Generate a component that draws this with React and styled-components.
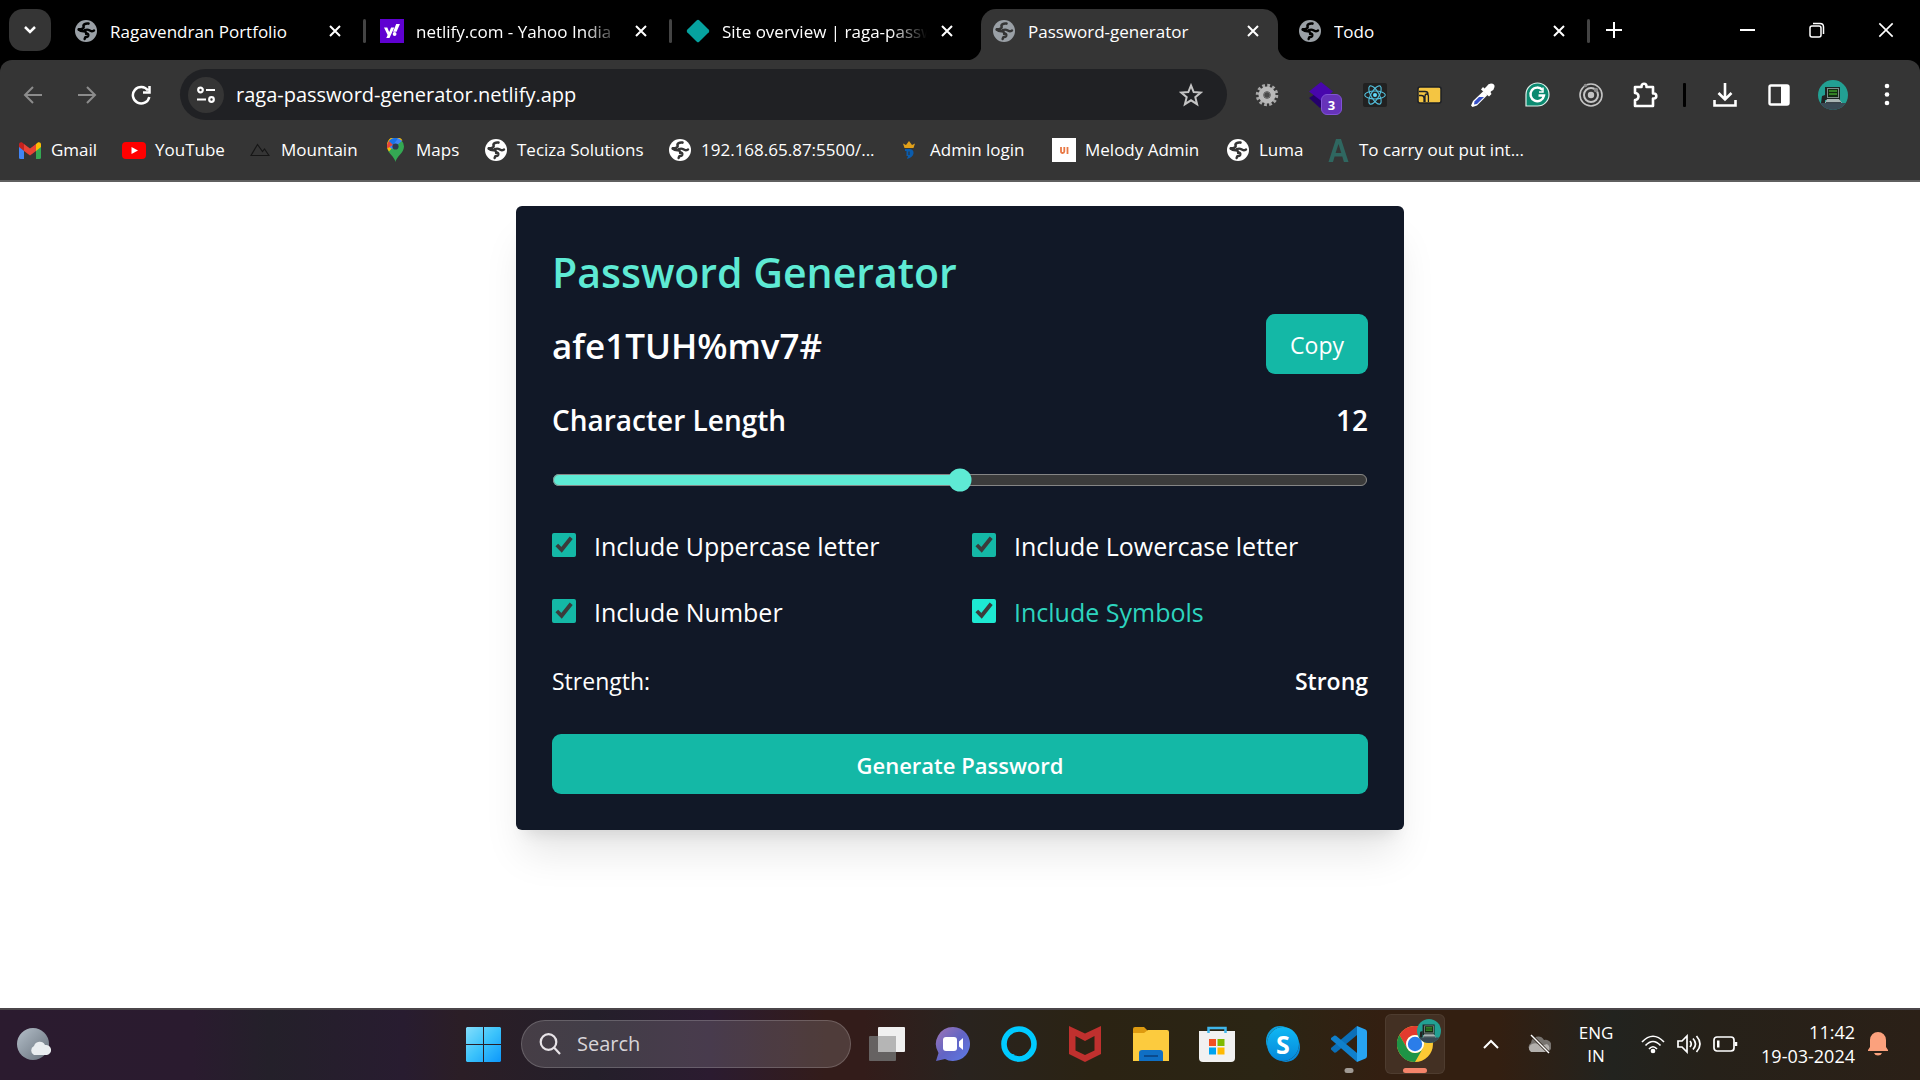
import React, { useState } from "react";
import styled, { createGlobalStyle } from "styled-components";

const ui = `"Open Sans", "Noto Sans", sans-serif`;
const chromeBg = "#353535";

const GlobalStyle = createGlobalStyle`
  * { box-sizing: border-box; }
  body { margin: 0; background: #fff; font-family: ${ui}; }
  button, input { font-family: inherit; }
  button { border: 0; padding: 0; background: none; color: inherit; cursor: pointer; }
  a { color: inherit; text-decoration: none; }
  svg { display: block; flex: none; }
`;

const Screen = styled.div`
  display: flex;
  flex-direction: column;
  min-height: 100vh;
`;

/* ---------- browser ---------- */

const TabStrip = styled.div`
  display: flex;
  height: 60px;
  background: #000;
  color: #fff;
`;

const TabSearch = styled.button`
  display: grid;
  place-items: center;
  flex: none;
  width: 42px;
  height: 42px;
  margin: 9px;
  border-radius: 14px;
  background: ${chromeBg};
`;

const Tab = styled.div`
  position: relative;
  display: flex;
  align-items: center;
  flex: 0 1 297px;
  min-width: 0;
  height: 51px;
  margin: 9px 3px 0;
  padding: 0 16px 8px 11px;
  border-radius: 15px 15px 0 0;
  background: ${(p) => (p.$active ? chromeBg : "transparent")};

  &::before,
  &::after {
    content: "";
    display: ${(p) => (p.$active ? "block" : "none")};
    position: absolute;
    bottom: 0;
    width: 15px;
    height: 15px;
  }
  &::before {
    right: 100%;
    background: radial-gradient(circle at 0 0, transparent 15px, ${chromeBg} 16px);
  }
  &::after {
    left: 100%;
    background: radial-gradient(circle at 100% 0, transparent 15px, ${chromeBg} 16px);
  }
`;

const TabDivider = styled.span`
  flex: none;
  width: 3px;
  height: 24px;
  margin-top: 19px;
  border-radius: 2px;
  background: ${(p) => (p.$hidden ? "transparent" : "#444")};
`;

const TabTitle = styled.span`
  flex: 1;
  min-width: 0;
  margin: 2px 11px 0 12px;
  overflow: hidden;
  white-space: nowrap;
  font-size: 17px;
  line-height: 24px;
  mask-image: ${(p) => (p.$fade ? "linear-gradient(90deg, #000 82%, transparent)" : "none")};
`;

const IconSlot = styled.span`
  display: grid;
  place-items: center;
  flex: none;
  width: 24px;
  height: 24px;
`;

const TabClose = styled.button`
  display: grid;
  place-items: center;
  width: 18px;
  height: 24px;
`;

const NewTab = styled.button`
  display: grid;
  place-items: center;
  width: 48px;
  height: 60px;
`;

const WindowControls = styled.div`
  display: flex;
  margin-left: auto;
`;

const WindowButton = styled.button`
  display: grid;
  place-items: center;
  width: 69px;
  height: 60px;
`;

const ToolbarBack = styled.div`
  background: #000;
`;

const Toolbar = styled.div`
  border-radius: 12px 12px 0 0;
  border-bottom: 2px solid #5f5f5f;
  background: ${chromeBg};
  color: #fff;
`;

const AddressRow = styled.div`
  display: flex;
  align-items: center;
  height: 60px;
  padding: 9px 6px 0;
`;

const ToolButton = styled.button`
  position: relative;
  display: grid;
  place-items: center;
  flex: none;
  width: 54px;
  height: 51px;
`;

const AddressBar = styled.div`
  display: flex;
  align-items: center;
  flex: 1;
  height: 51px;
  margin: 0 13px 0 12px;
  padding: 0 24px 0 8px;
  border-radius: 26px;
  background: #202124;
`;

const SiteInfo = styled.button`
  display: grid;
  place-items: center;
  width: 36px;
  height: 36px;
  border-radius: 50%;
  background: ${chromeBg};
`;

const Url = styled.input`
  flex: 1;
  min-width: 0;
  margin-left: 12px;
  padding: 0;
  border: 0;
  outline: 0;
  background: none;
  color: #fff;
  font-size: 20px;
  line-height: 30px;
`;

const ToolDivider = styled.span`
  flex: none;
  width: 3px;
  height: 24px;
  margin: 0 12px 0 11px;
  border-radius: 1px;
  background: #000;
`;

const Badge = styled.span`
  position: absolute;
  right: 6px;
  bottom: 5px;
  display: grid;
  place-items: center;
  width: 21px;
  height: 21px;
  border: 1px solid #8152d6;
  border-radius: 6px;
  background: #6633b9;
  font-size: 13px;
  font-weight: 700;
`;

const Bookmarks = styled.nav`
  display: flex;
  align-items: center;
  gap: 25px;
  height: 60px;
  padding: 0 18px;
`;

const Bookmark = styled.a`
  display: flex;
  align-items: center;
  gap: 9px;
  flex: none;
  width: ${(p) => p.$width}px;
  white-space: nowrap;
  font-size: 17px;
  line-height: 24px;
`;

const AvatarSquare = styled.svg`
  border-radius: 50%;
`;

/* ---------- generator ---------- */

const Page = styled.main`
  display: flex;
  justify-content: center;
  align-items: flex-start;
  flex: 1;
  padding: 24px 24px 0;
`;

const Card = styled.section`
  width: 100%;
  max-width: 888px;
  padding: 36px;
  border-radius: 6px;
  background: #111827;
  color: #fff;
  box-shadow: 0 30px 38px -8px rgba(0, 0, 0, 0.1), 0 12px 15px -9px rgba(0, 0, 0, 0.1);
`;

const Title = styled.h1`
  margin: 0 0 12px;
  color: #5eead4;
  font-size: 41px;
  font-weight: 600;
  line-height: 60px;
`;

const Row = styled.div`
  display: flex;
  align-items: center;
  justify-content: space-between;
`;

const Password = styled.output`
  padding-top: 4px;
  font-size: 35px;
  font-weight: 600;
  line-height: 48px;
`;

const ActionButton = styled.button`
  width: ${(p) => (p.$wide ? "100%" : "auto")};
  height: 60px;
  padding: 2px 24px 0;
  border-radius: 9px;
  background: #14b8a6;
  color: #fff;
  font-size: ${(p) => (p.$wide ? 22 : 23)}px;
  font-weight: ${(p) => (p.$wide ? 600 : 400)};
  line-height: 36px;
`;

const LengthRow = styled(Row)`
  margin: 24px 0 26px;
  font-size: 28px;
  font-weight: 600;
  line-height: 44px;
`;

const Range = styled.input`
  display: block;
  width: 100%;
  height: 16px;
  margin: 0;
  color-scheme: dark;
  accent-color: #5eead4;
  zoom: 1.5;
`;

const Options = styled.div`
  display: grid;
  grid-template-columns: 1fr 1fr;
  gap: 24px;
  margin: 32px 0 30px;
`;

const Option = styled.label`
  display: flex;
  align-items: center;
  gap: 18px;
  height: 42px;
  color: ${(p) => (p.$lit ? "#2dd4bf" : "#fff")};
  font-size: 25px;
  line-height: 40px;

  input {
    width: 24px;
    height: 24px;
    margin: 0;
    color-scheme: dark;
    accent-color: ${(p) => (p.$lit ? "#1de9d2" : "#14b8a6")};
  }
  span { padding-top: 2px; }
`;

const StrengthRow = styled(Row)`
  margin-bottom: 34px;
  font-size: 23px;
  line-height: 38px;

  strong { font-weight: 600; }
`;

/* ---------- taskbar ---------- */

const Taskbar = styled.footer`
  display: grid;
  grid-template-columns: minmax(0, 1fr) auto 472px;
  align-items: center;
  height: 72px;
  padding-bottom: 2px;
  border-top: 2px solid #4b464a;
  background: linear-gradient(90deg, #2b1b2f 0%, #2a1b2f 10%, #24202a 14%, #281c30 21%, #2b1e26 24%, #241f2a 31%, #2b1b30 37%, #331c1a 43%, #331c1a 45%, #29231f 50%, #2b2313 57%, #2b2514 66%, #331f11 72%, #331f11 78%, #22231f 84%, #262119 89%, #2b2017 100%);
  color: #fff;
`;

const Weather = styled.button`
  justify-self: start;
  margin-left: 15px;
`;

const Apps = styled.div`
  display: flex;
  align-items: center;
`;

const AppButton = styled.button`
  position: relative;
  display: grid;
  place-items: center;
  width: 60px;
  height: 60px;
  margin: 0 3px;
  border-radius: 6px;
  background: ${(p) => (p.$open ? "rgba(255, 255, 255, 0.08)" : "none")};
  box-shadow: ${(p) => (p.$open ? "inset 0 0 0 1px rgba(255, 255, 255, 0.06)" : "none")};

  &::after {
    content: "";
    display: ${(p) => (p.$mark ? "block" : "none")};
    position: absolute;
    bottom: 1px;
    left: 50%;
    translate: -50% 0;
    width: ${(p) => (p.$open ? 24 : 9)}px;
    height: 5px;
    border-radius: 3px;
    background: ${(p) => p.$mark};
  }
`;

const Companion = styled.span`
  position: absolute;
  top: 5px;
  right: 4px;
`;

const SearchBox = styled.label`
  display: flex;
  align-items: center;
  gap: 16px;
  width: 330px;
  height: 48px;
  margin: 0 3px 0 5px;
  padding: 0 17px;
  border: 1px solid rgba(255, 255, 255, 0.18);
  border-radius: 24px;
  background: rgba(255, 255, 255, 0.14);

  input {
    flex: 1;
    min-width: 0;
    padding: 0;
    border: 0;
    outline: 0;
    background: none;
    color: #d8d4d8;
    font-size: 20px;
    line-height: 28px;
  }
  input::placeholder { color: #d8d4d8; opacity: 1; }
`;

const Tray = styled.div`
  display: flex;
  align-items: center;
  justify-content: flex-end;
  padding-right: 19px;
`;

const TrayButton = styled.button`
  display: flex;
  align-items: center;
  justify-content: center;
  width: ${(p) => p.$width}px;
  height: 60px;
  text-align: center;
  font-size: 17px;
  line-height: 23px;
`;

const QuickSettings = styled.button`
  display: flex;
  margin-left: 6px;

  svg { margin: 0 5px; }
`;

const Clock = styled.button`
  width: 112px;
  text-align: right;
  white-space: nowrap;
  font-size: 18px;
  line-height: 24px;
`;

/* ---------- drawings ---------- */

const Line = ({ w = 24, h = w, box = "0 0 24 24", sw = 2, color = "#fff", children }) => (
  <svg width={w} height={h} viewBox={box} fill="none" stroke={color} strokeWidth={sw}>
    {children}
  </svg>
);

const Globe = ({ color = "#9aa0a6", hole = "#000" }) => (
  <svg width="24" height="24" viewBox="0 0 24 24">
    <circle cx="12" cy="12" r="11" fill={color} />
    <g fill="none" stroke={hole} strokeLinecap="round" strokeLinejoin="round">
      <path d="M14.500 4.600C11.500 4 9 5.500 9.600 7.300 10.300 9.300 8 10.300 4.800 10.400" strokeWidth="2.600" />
      <path d="M4.800 10.800q1.500 1.600 5 1.500 2.600.2 2.300 2.700" strokeWidth="2.400" />
      <path d="M20 11.400c-1.800 1.200-3.400.8-4.600-.1-1.500-1-3.400-.7-4.600-.2M12.300 14.500q2.400.3 2 2.100-.4 1.500-3 1.500L10.600 20" strokeWidth="2.400" />
    </g>
  </svg>
);

const Cross = ({ size = 12, sw = 2 }) => (
  <Line w={size} box="0 0 12 12" sw={sw}>
    <path d="M1 1l10 10M11 1L1 11" />
  </Line>
);

const Yahoo = () => (
  <svg width="24" height="24" viewBox="0 0 24 24">
    <rect width="24" height="24" fill="#5f01d1" />
    <path d="M4 8.500h3.300l1.900 4.600 1.900-4.600h3.200L9.500 19H6.300l1.300-2.900z" fill="#fff" />
    <path d="M16.200 5h3.700l-3.300 7.800h-3.500z" fill="#fff" />
    <circle cx="14.600" cy="15" r="1.900" fill="#fff" />
  </svg>
);

const Diamond = () => (
  <svg width="24" height="24" viewBox="0 0 24 24">
    <path d="M10.800 1.200q1.200-1 2.400 0l9.600 9.600q1 1.200 0 2.400l-9.600 9.600q-1.200 1-2.400 0l-9.600-9.600q-1-1.200 0-2.400z" fill="#06a29f" />
  </svg>
);

const Robot = ({ size }) => (
  <AvatarSquare width={size} height={size} viewBox="0 0 30 30">
    <rect width="30" height="30" fill="#22a093" />
    <path d="M0 23h30v7H0z" fill="#3a4a55" />
    <path d="M4 16l3-1v8H3z" fill="#222" />
    <path d="M7 7h15v13H7z" fill="#1c2422" />
    <path d="M9 8h12v10H9z" fill="#7f8c8a" />
    <path d="M10 9h10v8H10z" fill="#122b12" />
    <path d="M11 11h8M11 14h8" stroke="#3f9d2c" strokeWidth="1.500" />
    <path d="M9 19h12l3 4H7z" fill="#a9b5b4" />
    <path d="M8 22h15v1.500H8z" fill="#39434a" />
  </AvatarSquare>
);

const Gmail = () => (
  <svg width="22" height="17" viewBox="0 0 22 17">
    <path d="M0 2v13.500Q0 17 1.500 17H5V7z" fill="#4285f4" />
    <path d="M22 2v13.500Q22 17 20.500 17H17V7z" fill="#34a853" />
    <path d="M17 2l1.500-1.200C20 -.3 22 .5 22 2.500V5l-5 4z" fill="#fbbc04" />
    <path d="M5 9L0 5V2.500C0 .5 2-.3 3.500.8L5 2z" fill="#c5221f" />
    <path d="M5 2l6 4.500L17 2v7l-6 4.500L5 9z" fill="#ea4335" />
  </svg>
);

const YouTube = () => (
  <svg width="24" height="17" viewBox="0 0 24 17">
    <rect width="24" height="17" rx="4" fill="#f00" />
    <path d="M9.500 5l6.500 3.500L9.500 12z" fill="#fff" />
  </svg>
);

const Mountain = () => (
  <Line w={20} h={14} box="0 0 20 14" sw={1.2} color="#161616">
    <path d="M1 12.500L7.500 1.500l5 7 2-2.500 4.500 6.500z" />
  </Line>
);

const MapPin = () => (
  <svg width="17" height="24" viewBox="0 0 17 24">
    <path d="M8.500 24C8 19 0 15 0 8.500A8.500 8.500 0 0 1 17 8.500C17 15 9 19 8.500 24z" fill="#34a853" />
    <path d="M2 13.600L11 3l4.500-.5A8.500 8.500 0 0 0 0 8.500q0 2.700 2 5.100z" fill="#fbbc04" />
    <path d="M.1 7.500L5 11 15 3A8.500 8.500 0 0 0 2 3z" fill="#4285f4" />
    <path d="M2 3l4.500 3.500L.2 10.500Q-.5 6 2 3z" fill="#ea4335" />
    <path d="M2 3A8.500 8.500 0 0 1 11 .4L6 7z" fill="#1a73e8" />
    <circle cx="8.500" cy="8.500" r="3.100" fill="#2c3a52" />
  </svg>
);

const Crown = () => (
  <svg width="12" height="18" viewBox="0 0 12 18">
    <path d="M0 2.500l3 1.500 3-4 3 4 3-1.500L10.500 7h-9z" fill="#e0a01a" />
    <path d="M2 8h5q4 .5 3.500 4.500Q10 16 4 18l1-3H3.500v-5H2z" fill="#0b5cad" />
    <path d="M6 10.500v3.500" stroke="#353535" strokeWidth="1.200" />
  </svg>
);

const MelodyTile = styled.span`
  display: grid;
  place-items: center;
  width: 24px;
  height: 24px;
  background: #fff;
`;

const LetterA = () => (
  <svg width="21" height="23" viewBox="0 0 21 23">
    <path d="M8 0h5l7.500 23h-4.600l-1.600-5.500H6.600L5 23H.5zM10.500 5L7.600 14h5.700z" fill="#2f6760" fillRule="evenodd" />
  </svg>
);

const Gear = () => (
  <svg width="24" height="24" viewBox="0 0 24 24">
    <circle cx="12" cy="12" r="9.500" fill="none" stroke="#a8a8a8" strokeWidth="3.500" strokeDasharray="2.730 2.240" />
    <circle cx="12" cy="12" r="6" fill="none" stroke="#b9b9b9" strokeWidth="5" />
    <circle cx="12" cy="12" r="3.200" fill="#4a4a4a" stroke="#777" />
  </svg>
);

const Layers = () => (
  <svg width="24" height="28" viewBox="0 0 24 28">
    <path d="M0 17l11-7 11 9-11 8z" fill="#24006b" />
    <path d="M0 10.500L12 1l12 9.500-11 10z" fill="#4806ad" />
  </svg>
);

const ReactLogo = () => (
  <svg width="24" height="24" viewBox="0 0 24 24">
    <rect width="24" height="24" rx="2" fill="#212121" />
    <g fill="none" stroke="#53c1de" strokeWidth="1.100">
      <ellipse cx="12" cy="12" rx="10.300" ry="4" />
      <ellipse cx="12" cy="12" rx="10.300" ry="4" transform="rotate(60 12 12)" />
      <ellipse cx="12" cy="12" rx="10.300" ry="4" transform="rotate(120 12 12)" />
    </g>
    <circle cx="12" cy="12" r="2" fill="#61dafb" />
  </svg>
);

const Viewport = () => (
  <svg width="25" height="18" viewBox="0 0 25 18">
    <rect x="1" y="1" width="23" height="16" rx="2" fill="#f4c542" stroke="#1d2026" strokeWidth="1.500" />
    <path d="M2 5.500h6q3 0 3 2.500M2 9.500h2.500q2.500 0 2.500 2.500v4M8 16v-5.500q0-2.500 1.700-2.500t1.700 2.500V16" fill="none" stroke="#1d2026" strokeWidth="1.300" />
  </svg>
);

const Dropper = () => (
  <svg width="24" height="24" viewBox="0 0 24 24">
    <path d="M13.500 5.500L16 3q1-2.500 4-2.500Q24 .500 23.500 4q-.5 3-3 4l-1 1 1 2-2.500 2.500-8-7L12 4z" fill="#fff" />
    <path d="M12.500 8l4 4L6 22.500 1.500 24 0 22.500 2 18z" fill="#fff" />
    <path d="M8 14h5l-7 7-3 .500.500-3z" fill="#3650c8" />
  </svg>
);

const Grammarly = () => (
  <svg width="25" height="25" viewBox="0 0 25 25">
    <path d="M1 24V12.500A11.500 11.500 0 1 1 12.500 24z" fill="#0b8a70" stroke="#dff0ec" strokeWidth="1.200" />
    <path d="M17.500 8A6.800 6.800 0 1 0 19 13.500h-5.500" fill="none" stroke="#fff" strokeWidth="2.400" />
    <path d="M18 5.500V10h-4" fill="none" stroke="#fff" strokeWidth="1.500" />
  </svg>
);

const Rings = () => (
  <Line color="#c4c4c4" sw={1.6}>
    <circle cx="12" cy="12" r="11" />
    <circle cx="12" cy="12" r="7" strokeWidth="2" />
    <circle cx="12" cy="12" r="3.200" fill="#c4c4c4" stroke="none" />
    <circle cx="6.500" cy="2.500" r="1.800" fill="#8a8a8a" stroke="none" />
    <circle cx="17" cy="7" r="2.200" fill="#8a8a8a" stroke="none" />
  </Line>
);

const Puzzle = () => (
  <Line w={26} box="0 0 26 26" sw={2.6}>
    <path d="M3 5h6.500V4.200a2.500 2.500 0 0 1 5 0V5H21v6.500h.8a2.500 2.500 0 0 1 0 5H21V24H3v-6a3.500 3.500 0 0 0 0-7z" strokeLinejoin="round" />
  </Line>
);

const Star = () => (
  <Line color="#c4c4c4" sw={2}>
    <path d="M12 2.500l2.700 6.600 7.100.5-5.500 4.600 1.800 7L12 17.300l-6.100 3.900 1.800-7-5.500-4.600 7.100-.5z" />
  </Line>
);

const WeatherIcon = () => (
  <svg width="36" height="34" viewBox="0 0 36 34">
    <defs>
      <linearGradient id="moon" x1="0" y1="0" x2="1" y2="1">
        <stop offset="0" stopColor="#b4bfc9" />
        <stop offset="1" stopColor="#66707b" />
      </linearGradient>
    </defs>
    <circle cx="18" cy="17" r="16" fill="url(#moon)" />
    <path d="M19 28a5 5 0 0 1 0-9 6 6 0 0 1 11-1 5 5 0 0 1 2 10z" fill="#e9edf0" />
  </svg>
);

const WindowsLogo = () => (
  <svg width="35" height="35" viewBox="0 0 35 35">
    <defs>
      <linearGradient id="win" x1="0" y1="0" x2="1" y2="1">
        <stop offset="0" stopColor="#84defb" />
        <stop offset="0.500" stopColor="#3cc3fb" />
        <stop offset="1" stopColor="#0c97fb" />
      </linearGradient>
    </defs>
    <path d="M1 0h16v17H0V1zM18 0h16l1 1v16H18zM0 18h17v17H1l-1-1zM18 18h17v16l-1 1H18z" fill="url(#win)" />
  </svg>
);

const TaskView = () => (
  <svg width="36" height="36" viewBox="0 0 36 36">
    <rect x="9" y="1" width="27" height="25" rx="1" fill="#f0f0f0" />
    <rect x="0" y="10" width="27" height="25" rx="1" fill="#6b6a6a" opacity="0.900" />
    <rect x="9" y="10" width="18" height="16" fill="#b5b5b5" />
  </svg>
);

const Chat = () => (
  <svg width="36" height="36" viewBox="0 0 36 36">
    <defs>
      <linearGradient id="chat" x1="0" y1="0" x2="1" y2="1">
        <stop offset="0" stopColor="#a076b5" />
        <stop offset="0.500" stopColor="#6264c4" />
        <stop offset="1" stopColor="#5b7be8" />
      </linearGradient>
    </defs>
    <path d="M18 1a17 17 0 1 1-8 32l-9 2 2.500-8A17 17 0 0 1 18 1z" fill="url(#chat)" />
    <rect x="8" y="11" width="14" height="14" rx="3" fill="#fff" />
    <path d="M24 15.500l4-3.500v12l-4-3.500z" fill="#fff" />
  </svg>
);

const Alexa = () => (
  <svg width="36" height="36" viewBox="0 0 36 36">
    <circle cx="18" cy="18" r="15" fill="none" stroke="#00caff" strokeWidth="5.600" />
    <path d="M8 29l7 .2q1.200.8 1 2.800v3.500h2c6-1.500 12-7 14-12l-3-1c-2 4-6 7.500-11 8.500l-6-3z" fill="#00caff" />
  </svg>
);

const McAfee = () => (
  <svg width="32" height="36" viewBox="0 0 32 36">
    <path d="M0 0l16 7.500L32 0v28l-16 8-16-8zM6.500 10v14.500L16 29l9.500-4.500V10L16 15z" fill="#c0302e" fillRule="evenodd" />
  </svg>
);

const Explorer = () => (
  <svg width="36" height="34" viewBox="0 0 36 34">
    <path d="M0 2q0-2 2-2h9l4 4-3 5H0z" fill="#dd9a10" />
    <path d="M0 6h11l4-3h19q2 0 2 2v29H0z" fill="#fccb3e" />
    <path d="M6 34V26q0-3 3-3h18q3 0 3 3v8z" fill="#0f6fc4" />
    <path d="M11 29h14" stroke="#0a4b8e" strokeWidth="2" />
  </svg>
);

const Store = () => (
  <svg width="36" height="36" viewBox="0 0 36 36">
    <path d="M0 5h36v27q0 4-4 4H4q-4 0-4-4z" fill="#f1f1f1" />
    <path d="M9.500 7V2h17v5" fill="none" stroke="#3fb6ea" strokeWidth="2.500" />
    <path d="M10 13h7v7h-7z" fill="#f25022" />
    <path d="M18.500 13h7v7h-7z" fill="#7fba00" />
    <path d="M10 21.500h7v7h-7z" fill="#00a4ef" />
    <path d="M18.500 21.500h7v7h-7z" fill="#ffb900" />
  </svg>
);

const SkypeMark = styled.span`
  display: grid;
  place-items: center;
  width: 32px;
  height: 34px;
  border-radius: 50%;
  background: linear-gradient(#10b8f4, #0587d9);
  box-shadow: -3px -3px 0 -2px #0ea0dc, 3px 3px 0 -2px #0a8ad8;
  color: #fff;
  font-size: 25px;
  font-weight: 700;
  line-height: 34px;
`;

const VsCode = () => (
  <svg width="36" height="36" viewBox="0 0 36 36">
    <path d="M26 0v9L5 26.500l-1.500.200L0 23.500v-1.500z" fill="#0b6fb8" />
    <path d="M0 13.500v-1.500L3.500 9.500 5 9.700 26 27v9z" fill="#1080cc" />
    <path d="M26 0l8.500 3.500Q36 4.200 36 6v24q0 1.800-1.500 2.500L26 36z" fill="#27a4f2" />
  </svg>
);

const Chrome = () => (
  <svg width="36" height="36" viewBox="0 0 36 36">
    <circle cx="18" cy="18" r="18" fill="#fcc934" />
    <path d="M2.400 9A18 18 0 0 1 33.600 9H18a9 9 0 0 0-7.800 4.500L10.200 22.500z" fill="#e33b2e" />
    <path d="M2.400 9A18 18 0 0 0 18 36l7.800-13.500A9 9 0 0 1 10.200 22.500z" fill="#1e9446" />
    <circle cx="18" cy="18" r="9" fill="#fff" />
    <circle cx="18" cy="18" r="7.200" fill="#2b7de9" />
  </svg>
);

const CloudOff = () => (
  <svg width="24" height="20" viewBox="0 0 24 20">
    <path d="M5 18a5 5 0 0 1-1-9 7 7 0 0 1 13-3 6 6 0 0 1 3 12z" fill="#77736f" />
    <path d="M4 18a4.500 4.500 0 0 1 1-8q5-2 9 2l6-2a4.500 4.500 0 0 1 0 8z" fill="#b3b0ad" />
    <path d="M4 1l18 18" stroke="#2b2018" strokeWidth="3" />
    <path d="M4 1l18 18" stroke="#fff" strokeWidth="1.500" />
  </svg>
);

const Bell = () => (
  <svg width="20" height="24" viewBox="0 0 20 24">
    <path d="M10 0a8 8 0 0 1 8 8v7l2 3v1H0v-1l2-3V8a8 8 0 0 1 8-8zM6 21h8q-1 2.500-4 2.500T6 21z" fill="#fba17d" />
  </svg>
);

/* ---------- data ---------- */

const tabs = [
  { title: "Ragavendran Portfolio", icon: <Globe /> },
  { title: "netlify.com - Yahoo India", icon: <Yahoo />, fade: true },
  { title: "Site overview | raga-passw", icon: <Diamond />, fade: true, edge: true },
  { title: "Password-generator", icon: <Globe hole={chromeBg} />, active: true, edge: true },
  { title: "Todo", icon: <Globe /> },
];

const whiteGlobe = <Globe color="#fff" hole={chromeBg} />;

const bookmarks = [
  { label: "Gmail", icon: <Gmail />, width: 79 },
  { label: "YouTube", icon: <YouTube />, width: 101 },
  { label: "Mountain", icon: <Mountain />, width: 110 },
  { label: "Maps", icon: <MapPin />, width: 76 },
  { label: "Teciza Solutions", icon: whiteGlobe, width: 159 },
  { label: "192.168.65.87:5500/...", icon: whiteGlobe, width: 204 },
  { label: "Admin login", icon: <Crown />, width: 130 },
  {
    label: "Melody Admin",
    icon: (
      <MelodyTile>
        <Line w={9} h={7} box="0 0 9 7" sw={1.8} color="#e87844">
          <path d="M1 0v4.500q0 1.500 1.600 1.500T4.300 4.500V0M7.500 0v7" />
        </Line>
      </MelodyTile>
    ),
    width: 149,
  },
  { label: "Luma", icon: whiteGlobe, width: 75 },
  { label: "To carry out put int...", icon: <LetterA />, width: 200 },
];

const extensions = [
  ["Settings helper", <Gear />],
  ["Layers", <Layers />, "3"],
  ["React Developer Tools", <ReactLogo />],
  ["Viewport resizer", <Viewport />],
  ["Color picker", <Dropper />],
  ["Grammarly", <Grammarly />],
  ["Rings", <Rings />],
  ["Extensions", <Puzzle />],
];

const apps = [
  ["Task view", <TaskView />],
  ["Chat", <Chat />],
  ["Alexa", <Alexa />],
  ["McAfee", <McAfee />],
  ["File Explorer", <Explorer />],
  ["Microsoft Store", <Store />],
  ["Skype", <SkypeMark>S</SkypeMark>],
];

const optionList = ["Uppercase letter", "Lowercase letter", "Number", "Symbols"];

function BrowserChrome() {
  return (
    <header>
      <TabStrip>
        <TabSearch aria-label="Search tabs">
          <Line w={14} h={10} box="0 0 14 10" sw={2.5}>
            <path d="M2 2l5 5 5-5" />
          </Line>
        </TabSearch>
        {tabs.map((t) => (
          <React.Fragment key={t.title}>
            <Tab $active={t.active}>
              <IconSlot>{t.icon}</IconSlot>
              <TabTitle $fade={t.fade}>{t.title}</TabTitle>
              <TabClose aria-label={`Close ${t.title}`}><Cross /></TabClose>
            </Tab>
            <TabDivider $hidden={t.edge} />
          </React.Fragment>
        ))}
        <NewTab aria-label="New tab">
          <Line w={16} box="0 0 16 16"><path d="M8 0v16M0 8h16" /></Line>
        </NewTab>
        <WindowControls>
          <WindowButton aria-label="Minimize">
            <Line w={15} box="0 0 15 15"><path d="M0 7h15" /></Line>
          </WindowButton>
          <WindowButton aria-label="Restore">
            <Line w={16} box="0 0 16 16" sw={1.5}>
              <rect x="1" y="4" width="11" height="11" rx="2" />
              <path d="M4 1.500h7q3.500 0 3.500 3.500v7" />
            </Line>
          </WindowButton>
          <WindowButton aria-label="Close window"><Cross size={16} sw={1.2} /></WindowButton>
        </WindowControls>
      </TabStrip>
      <ToolbarBack>
        <Toolbar>
          <AddressRow>
            <ToolButton aria-label="Back">
              <Line w={20} box="0 0 20 20" color="#8c8c8c"><path d="M19 10H2M10 2l-8 8 8 8" /></Line>
            </ToolButton>
            <ToolButton aria-label="Forward">
              <Line w={20} box="0 0 20 20" color="#8c8c8c"><path d="M1 10h17M10 2l8 8-8 8" /></Line>
            </ToolButton>
            <ToolButton aria-label="Reload">
              <Line w={20} box="0 0 20 20" sw={2.5}>
                <path d="M17 5.500A8.300 8.300 0 1 0 18.300 12M18.500 1v6.500H12" />
              </Line>
            </ToolButton>
            <AddressBar>
              <SiteInfo aria-label="Site information">
                <Line w={18} box="0 0 18 18" sw={2.2}>
                  <circle cx="3.500" cy="4" r="2.300" />
                  <path d="M9 4h9M0 13.500h9" />
                  <circle cx="14.500" cy="13.500" r="2.300" />
                </Line>
              </SiteInfo>
              <Url aria-label="Address" defaultValue="raga-password-generator.netlify.app" />
              <button aria-label="Bookmark this page"><Star /></button>
            </AddressBar>
            {extensions.map(([name, icon, count]) => (
              <ToolButton key={name} aria-label={name}>
                {icon}
                {count && <Badge>{count}</Badge>}
              </ToolButton>
            ))}
            <ToolDivider />
            <ToolButton aria-label="Downloads">
              <Line sw={2.6}><path d="M12 0v16M5.500 10l6.500 6.500 6.500-6.500M1.500 17v5.500h21V17" /></Line>
            </ToolButton>
            <ToolButton aria-label="Side panel">
              <Line w={22} box="0 0 22 22" sw={2.4}>
                <rect x="1.500" y="1.500" width="19" height="19" rx="1.500" />
                <path d="M13 1h7v20h-7z" fill="#fff" stroke="none" />
              </Line>
            </ToolButton>
            <ToolButton aria-label="Profile"><Robot size={30} /></ToolButton>
            <ToolButton aria-label="Menu">
              <svg width="6" height="26" viewBox="0 0 6 26" fill="#fff">
                <circle cx="3" cy="4" r="2.300" /><circle cx="3" cy="12.500" r="2.300" /><circle cx="3" cy="21" r="2.300" />
              </svg>
            </ToolButton>
          </AddressRow>
          <Bookmarks>
            {bookmarks.map((b) => (
              <Bookmark key={b.label} href="#" $width={b.width}>
                <IconSlot>{b.icon}</IconSlot>
                {b.label}
              </Bookmark>
            ))}
          </Bookmarks>
        </Toolbar>
      </ToolbarBack>
    </header>
  );
}

function Generator() {
  const [length, setLength] = useState(12);
  return (
    <Page>
      <Card>
        <Title>Password Generator</Title>
        <Row>
          <Password>afe1TUH%mv7#</Password>
          <ActionButton>Copy</ActionButton>
        </Row>
        <LengthRow>
          <label htmlFor="length">Character Length</label>
          <span>{length}</span>
        </LengthRow>
        <Range id="length" type="range" min="4" max="20" value={length} onChange={(e) => setLength(e.target.value)} />
        <Options>
          {optionList.map((name) => (
            <Option key={name} $lit={name === "Symbols"}>
              <input type="checkbox" defaultChecked />
              <span>Include {name}</span>
            </Option>
          ))}
        </Options>
        <StrengthRow>
          <span>Strength:</span>
          <strong>Strong</strong>
        </StrengthRow>
        <ActionButton $wide>Generate Password</ActionButton>
      </Card>
    </Page>
  );
}

function SystemBar() {
  return (
    <Taskbar>
      <Weather aria-label="Weather"><WeatherIcon /></Weather>
      <Apps>
        <AppButton aria-label="Start"><WindowsLogo /></AppButton>
        <SearchBox>
          <Line w={22} box="0 0 22 22" sw={2.2} color="#e8e4e8">
            <circle cx="9.500" cy="9" r="7.800" /><path d="M15 14.500l6 6.500" />
          </Line>
          <input aria-label="Search" placeholder="Search" />
        </SearchBox>
        {apps.map(([name, icon]) => (
          <AppButton key={name} aria-label={name}>{icon}</AppButton>
        ))}
        <AppButton aria-label="Visual Studio Code" $mark="#a09a94"><VsCode /></AppButton>
        <AppButton aria-label="Google Chrome" $open $mark="#f4846a">
          <Chrome />
          <Companion><Robot size={24} /></Companion>
        </AppButton>
      </Apps>
      <Tray>
        <TrayButton $width={48} aria-label="Show hidden icons">
          <Line w={16} h={10} box="0 0 16 10"><path d="M1 9l7-7 7 7" /></Line>
        </TrayButton>
        <TrayButton $width={48} aria-label="OneDrive"><CloudOff /></TrayButton>
        <TrayButton $width={66}>ENG<br />IN</TrayButton>
        <QuickSettings aria-label="Network, volume and battery">
          <Line w={26} h={20} box="0 0 26 20" sw={1.7}>
            <path d="M2 8Q13-3.500 24 8M5.500 11.500q7.500-8 15 0M9 15q4-4.500 8 0" />
            <circle cx="13" cy="17" r="1.500" fill="#fff" />
          </Line>
          <Line w={26} h={20} box="0 0 26 20" sw={1.7}>
            <path d="M2 7h4l5-5v16l-5-5H2zM14 7q2.500 3 0 6M17 4.500q5 5.500 0 11M20.500 2q7 8 0 16" />
          </Line>
          <Line w={26} h={20} box="0 0 26 20" sw={1.7}>
            <rect x="2" y="3" width="20" height="14" rx="3" />
            <path d="M5 6.500h2.500v7H5z" fill="#fff" stroke="none" />
            <path d="M24 8v4" strokeWidth="2.500" />
          </Line>
        </QuickSettings>
        <Clock>11:42<br />19-03-2024</Clock>
        <TrayButton $width={46} aria-label="Notifications"><Bell /></TrayButton>
      </Tray>
    </Taskbar>
  );
}

export default function App() {
  return (
    <Screen>
      <GlobalStyle />
      <BrowserChrome />
      <Generator />
      <SystemBar />
    </Screen>
  );
}
